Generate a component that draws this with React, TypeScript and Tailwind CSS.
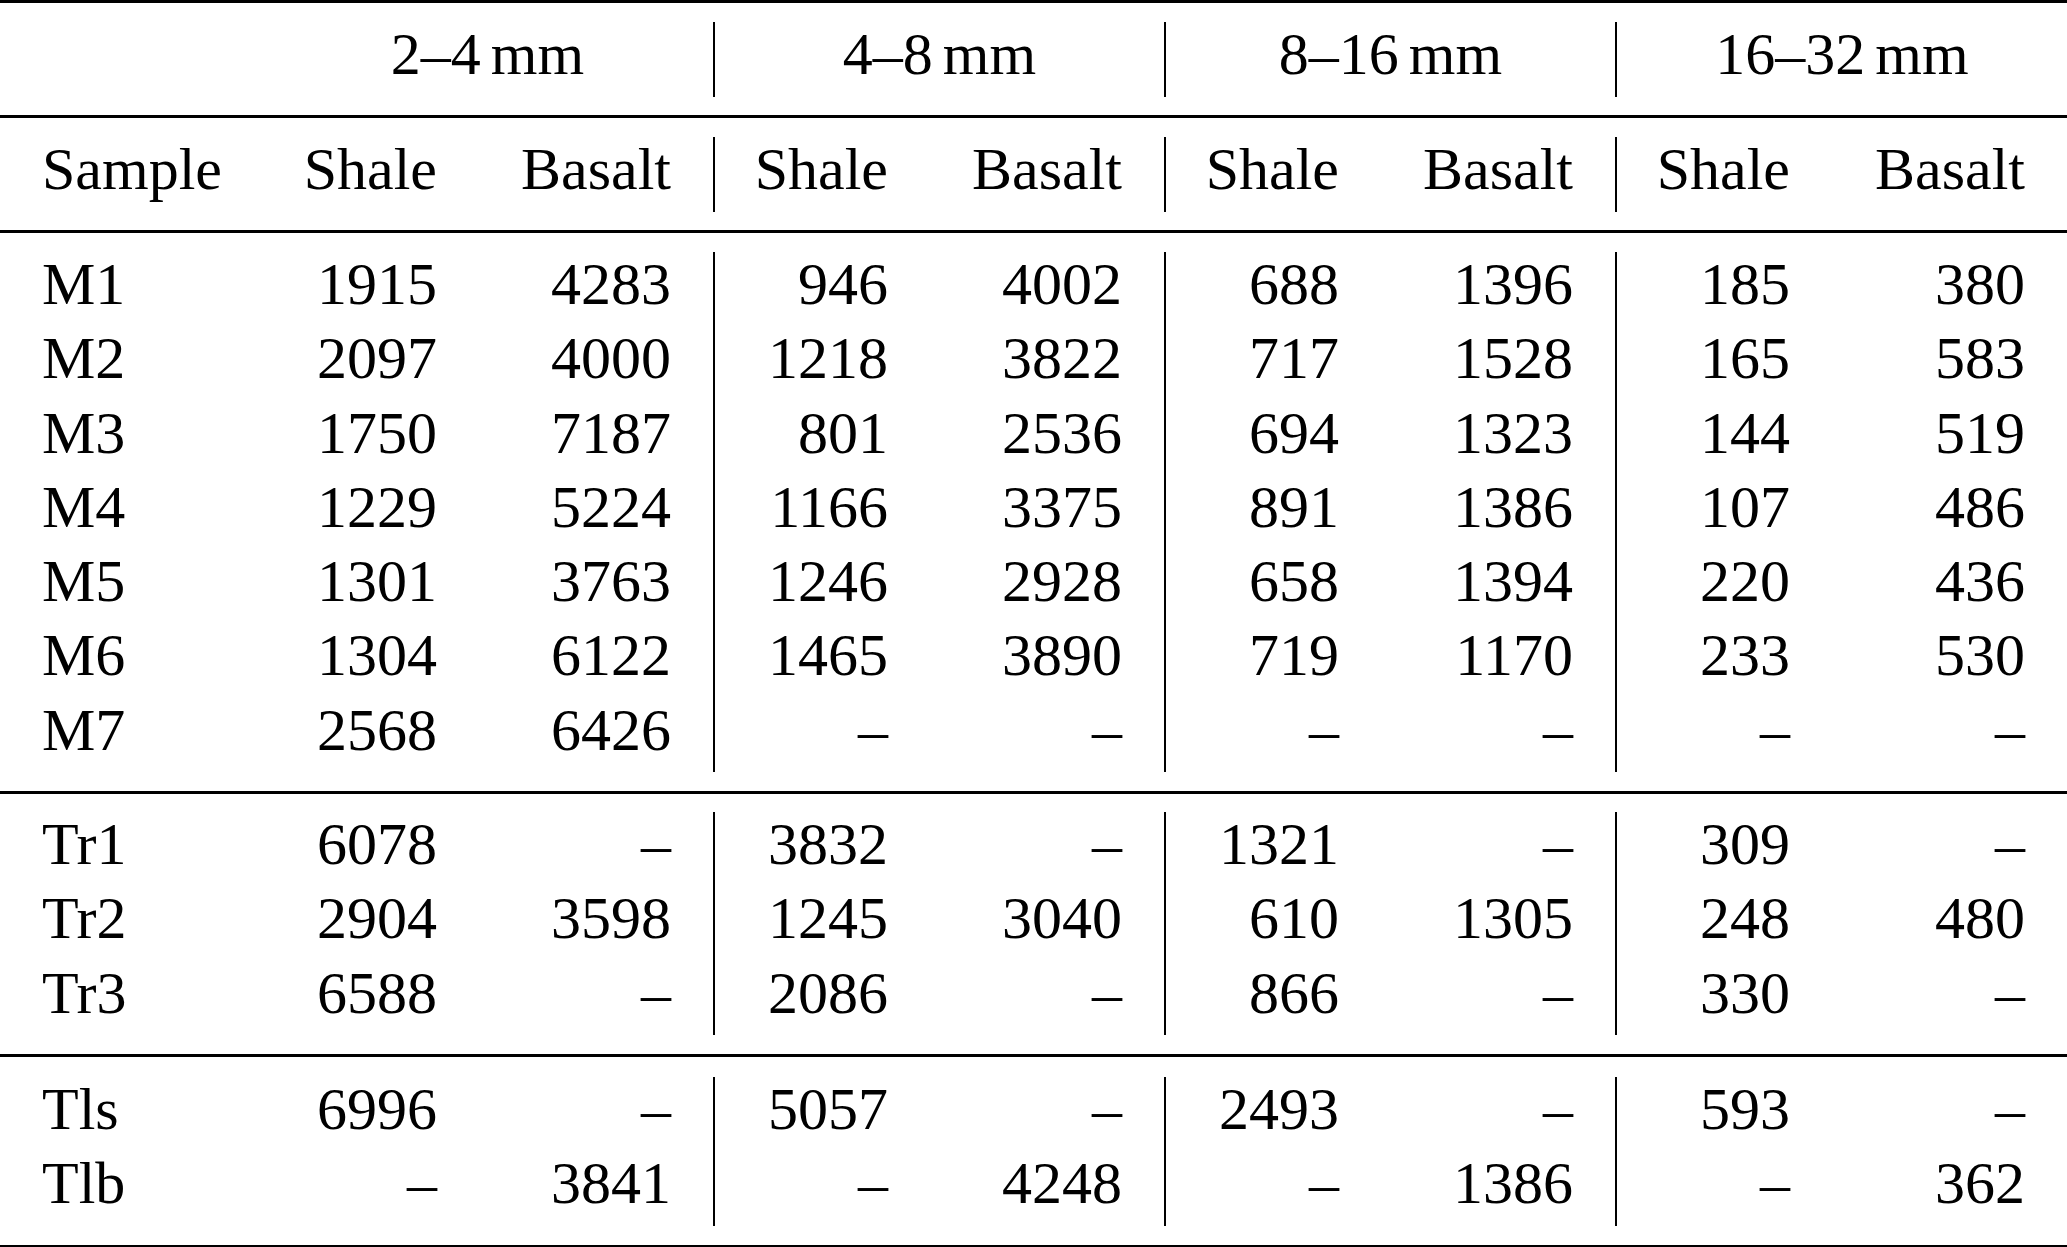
import React from "react";

type Row = string[];

const mBlock: Row[] = [
  ["M1", "1915", "4283", "946", "4002", "688", "1396", "185", "380"],
  ["M2", "2097", "4000", "1218", "3822", "717", "1528", "165", "583"],
  ["M3", "1750", "7187", "801", "2536", "694", "1323", "144", "519"],
  ["M4", "1229", "5224", "1166", "3375", "891", "1386", "107", "486"],
  ["M5", "1301", "3763", "1246", "2928", "658", "1394", "220", "436"],
  ["M6", "1304", "6122", "1465", "3890", "719", "1170", "233", "530"],
  ["M7", "2568", "6426", "–", "–", "–", "–", "–", "–"],
];

const trBlock: Row[] = [
  ["Tr1", "6078", "–", "3832", "–", "1321", "–", "309", "–"],
  ["Tr2", "2904", "3598", "1245", "3040", "610", "1305", "248", "480"],
  ["Tr3", "6588", "–", "2086", "–", "866", "–", "330", "–"],
];

const tlBlock: Row[] = [
  ["Tls", "6996", "–", "5057", "–", "2493", "–", "593", "–"],
  ["Tlb", "–", "3841", "–", "4248", "–", "1386", "–", "362"],
];

const groupClass = [
  "w-[451px]",
  "w-[451px] border-l-2 border-black",
  "w-[451px] border-l-2 border-black",
  "w-[452px] border-l-2 border-black",
];

const gridClass = [
  "grid grid-cols-[217px_1fr]",
  "grid grid-cols-[215px_1fr]",
  "grid grid-cols-[215px_1fr]",
  "grid grid-cols-[215px_1fr]",
];

function Rule() {
  return <div className="h-[3px] w-full bg-black" />;
}

function DataBlock({ rows, pad }: { rows: Row[]; pad: string }) {
  return (
    <div className={`flex ${pad}`}>
      <div className="w-[262px] shrink-0">
        {rows.map((r) => (
          <div key={r[0]} className="h-[74.3px] pl-[42px] leading-[64px]">
            {r[0]}
          </div>
        ))}
      </div>
      {[0, 1, 2, 3].map((g) => (
        <div key={g} className={`${groupClass[g]} shrink-0`}>
          {rows.map((r) => (
            <div key={r[0]} className={gridClass[g]}>
              <div className="h-[74.3px] pr-[42px] text-right leading-[64px]">{r[1 + g * 2]}</div>
              <div className="h-[74.3px] pr-[42px] text-right leading-[64px]">{r[2 + g * 2]}</div>
            </div>
          ))}
        </div>
      ))}
    </div>
  );
}

const ranges = [
  ["2–4", "mm"],
  ["4–8", "mm"],
  ["8–16", "mm"],
  ["16–32", "mm"],
];

export default function App() {
  return (
    <div
      className="w-[2067px] h-[1247px] overflow-hidden bg-white text-black text-[60px]"
      style={{ fontFamily: '"Liberation Serif", "Times New Roman", serif' }}
    >
      <Rule />
      {/* header row 1 */}
      <div className="flex pt-[19px] pb-[18px]">
        <div className="w-[262px] shrink-0 h-[75px]" />
        {ranges.map((rg, g) => (
          <div key={g} className={`${groupClass[g]} shrink-0 h-[75px] text-center leading-[65px]`}>
            {rg[0]}
            <span className="ml-[10px]">{rg[1]}</span>
          </div>
        ))}
      </div>
      <Rule />
      {/* header row 2 */}
      <div className="flex pt-[19px] pb-[18px]">
        <div className="w-[262px] shrink-0 h-[75px] pl-[42px] leading-[65px]">Sample</div>
        {[0, 1, 2, 3].map((g) => (
          <div key={g} className={`${groupClass[g]} shrink-0`}>
            <div className={gridClass[g]}>
              <div className="h-[75px] pr-[42px] text-right leading-[65px]">Shale</div>
              <div className="h-[75px] pr-[42px] text-right leading-[65px]">Basalt</div>
            </div>
          </div>
        ))}
      </div>
      <Rule />
      <DataBlock rows={mBlock} pad="pt-[19px] pb-[19px]" />
      <Rule />
      <DataBlock rows={trBlock} pad="pt-[18px] pb-[19px]" />
      <Rule />
      <DataBlock rows={tlBlock} pad="pt-[20px] pb-[19px]" />
      <Rule />
    </div>
  );
}
